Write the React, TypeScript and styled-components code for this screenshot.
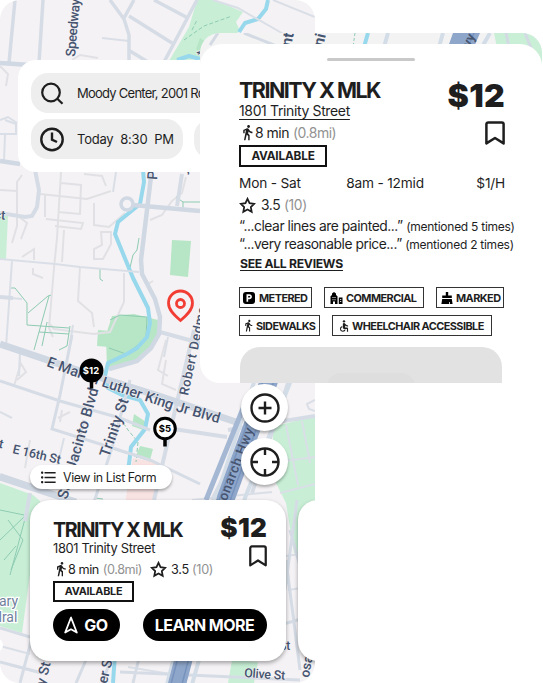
import type { ReactNode } from "react";
import styled, { createGlobalStyle } from "styled-components";
import {
    MdAccessible,
    MdDirectionsWalk,
    MdFormatListBulleted,
    MdLocalParking,
} from "react-icons/md";

const GlobalStyle = createGlobalStyle`
    * {
        box-sizing: border-box;
    }
    body {
        margin: 0;
        background-color: #ffffff;
        color: #1e1e1e;
        font-family: Inter, "Liberation Sans", sans-serif;
    }
    p, h2 {
        margin: 0;
    }
    svg {
        display: block;
        flex-shrink: 0;
    }
`;

const Page = styled.main`
    position: relative;
    width: 543px;
    height: 683px;
    overflow: hidden;
`;

const Phone = styled.div`
    position: relative;
    display: flex;
    flex-direction: column;
    width: 315px;
    height: 683px;
    padding-top: 60px;
    border-radius: 20px;
    overflow: hidden;
`;

const MapCanvas = styled.svg`
    position: absolute;
    top: 0;
    left: 0;
`;

const SearchPanel = styled.div`
    position: relative;
    display: flex;
    flex-direction: column;
    gap: 6px;
    width: 340px;
    height: 112px;
    margin-left: 18px;
    padding: 13px;
    border-radius: 18px;
    background-color: #ffffff;
`;

const FieldRow = styled.div`
    display: flex;
    gap: 11px;
`;

const Field = styled.div<{ $width: number }>`
    display: flex;
    align-items: center;
    gap: 12px;
    width: ${({ $width }) => $width}px;
    height: 40px;
    padding-left: 9px;
    border-radius: 17px;
    background-color: #eeeeee;
    font-size: 13px;
    white-space: pre;
`;

const FieldText = styled.span<{ $spacing?: number }>`
    letter-spacing: ${({ $spacing = 0 }) => $spacing}px;
`;

const Controls = styled.div`
    position: relative;
    display: flex;
    flex-direction: column;
    gap: 7px;
    width: 47px;
    margin: 212px 0 0 241px;
`;

const RoundButton = styled.button`
    display: flex;
    align-items: center;
    justify-content: center;
    width: 47px;
    height: 47px;
    padding: 0;
    border: none;
    border-radius: 50%;
    background-color: #ffffff;
    box-shadow: 0 2px 3px rgba(0, 0, 0, 0.3);
`;

const ListToggle = styled.button`
    position: relative;
    display: flex;
    align-items: center;
    gap: 5px;
    width: 142px;
    height: 24px;
    margin: -20px 0 0 30px;
    padding: 0 0 0 9px;
    border: none;
    border-radius: 12px;
    background-color: #ffffff;
    color: #1e1e1e;
    font-family: inherit;
    font-size: 12.4px;
    letter-spacing: -0.4px;
    white-space: nowrap;
    box-shadow: 0 2px 3px rgba(0, 0, 0, 0.3);
`;

const Carousel = styled.div`
    position: relative;
    display: flex;
    gap: 12px;
    width: 560px;
    margin: 11px 0 0 30px;
`;

const Card = styled.article`
    width: 256px;
    height: 161px;
    padding: 19px 19px 0 23px;
    border-radius: 20px;
    background-color: #ffffff;
    box-shadow: 0 2px 4px rgba(0, 0, 0, 0.35);
`;

const Header = styled.div`
    display: flex;
    justify-content: space-between;
`;

const Title = styled.h2<{ $size: number }>`
    font-size: ${({ $size }) => $size}px;
    font-weight: 700;
    line-height: 22px;
    letter-spacing: -0.071em;
    white-space: nowrap;
`;

const Address = styled.p<{ $size: number; $line: number; $underline?: boolean }>`
    width: fit-content;
    font-size: ${({ $size }) => $size}px;
    line-height: ${({ $line }) => $line}px;
    letter-spacing: -0.026em;
    text-decoration: ${({ $underline }) => ($underline ? "underline" : "none")};
    text-decoration-thickness: 1px;
    text-decoration-skip-ink: none;
    text-underline-offset: 3px;
`;

const Meta = styled.div<{ $size: number; $line: number }>`
    display: flex;
    align-items: center;
    height: ${({ $line }) => $line}px;
    font-size: ${({ $size }) => $size}px;
    letter-spacing: -0.036em;
    white-space: nowrap;
`;

const Walk = styled.span`
    display: flex;
    gap: 4px;
    margin-left: -1px;
`;

const Rating = styled.span<{ $inset?: number; $gap?: number }>`
    display: flex;
    align-items: center;
    gap: ${({ $gap = 5 }) => $gap}px;
    margin-left: ${({ $inset = 0 }) => $inset}px;
    letter-spacing: -0.025em;
`;

const Muted = styled.span`
    color: #929292;
`;

const PriceColumn = styled.div`
    display: flex;
    flex-direction: column;
    align-items: flex-end;
`;

const Price = styled.p<{ $size: number; $line: number }>`
    font-size: ${({ $size }) => $size}px;
    font-weight: 900;
    line-height: ${({ $line }) => $line}px;
    letter-spacing: 0.01em;
`;

const BookmarkButton = styled.button`
    margin-top: 8px;
    padding: 0;
    border: none;
    background: none;
`;

const Availability = styled.div<{ $width: number; $height: number }>`
    display: flex;
    align-items: center;
    justify-content: center;
    width: ${({ $width }) => $width}px;
    height: ${({ $height }) => $height}px;
    border: 2px solid #111111;
    font-size: ${({ $height }) => ($height > 21 ? 11.8 : 10.8)}px;
    font-weight: 700;
    letter-spacing: -0.2px;
`;

const Actions = styled.div`
    display: flex;
    justify-content: space-between;
    width: 214px;
    margin-top: 7.5px;
`;

const ActionButton = styled.button<{ $width: number }>`
    display: flex;
    align-items: center;
    justify-content: center;
    gap: 6px;
    width: ${({ $width }) => $width}px;
    height: 32px;
    padding: 0 1px 0 0;
    border: none;
    border-radius: 16px;
    background-color: #000000;
    color: #ffffff;
    font-family: inherit;
    font-size: 16px;
    font-weight: 700;
    letter-spacing: -0.5px;
    white-space: nowrap;
`;

// The sheet floats over the phone, with a strip of map left visible above it
const SheetFrame = styled.section`
    position: absolute;
    top: 33px;
    left: 200px;
    width: 342px;
    height: 350px;
    padding-top: 11px;
    border-radius: 20px 20px 0 20px;
    background-color: #f3f3f4;
    overflow: hidden;
`;

const Sheet = styled.div`
    position: relative;
    height: 339px;
    padding: 14px 37px 0 39px;
    border-radius: 22px 22px 0 0;
    background-color: #ffffff;
`;

const Handle = styled.div`
    width: 88px;
    height: 3px;
    margin: 0 0 18px 88px;
    border-radius: 2px;
    background-color: #c9c9c9;
`;

const Hours = styled.div`
    display: flex;
    justify-content: space-between;
    height: 18px;
    margin-top: 7px;
    font-size: 13.7px;
    line-height: 18px;
    letter-spacing: -0.2px;
`;

const HoursRange = styled.span`
    margin-right: 7px;
`;

const Quote = styled.p`
    font-size: 13.8px;
    line-height: 16.5px;
    letter-spacing: -0.45px;
    white-space: nowrap;
`;

const Mentions = styled.span`
    font-size: 12px;
    letter-spacing: -0.26px;
`;

const Reviews = styled.p`
    width: fit-content;
    margin: 3.5px 0 0 1px;
    border-bottom: 1px solid #1e1e1e;
    font-size: 12.2px;
    font-weight: 700;
    line-height: 13px;
    letter-spacing: -0.3px;
`;

const Chips = styled.div`
    display: flex;
    flex-wrap: wrap;
    gap: 7px 12px;
    width: 280px;
    margin-top: 16.5px;
`;

const Chip = styled.div<{ $width: number; $inset: number; $gap: number }>`
    display: flex;
    align-items: center;
    gap: ${({ $gap }) => $gap}px;
    width: ${({ $width }) => $width}px;
    height: 21px;
    padding-left: ${({ $inset }) => $inset}px;
    border: 1px solid #333333;
    font-size: 10.9px;
    font-weight: 700;
    letter-spacing: -0.55px;
    white-space: nowrap;
`;

const ParkingBadge = styled.span`
    display: flex;
    align-items: center;
    justify-content: center;
    width: 12px;
    height: 12px;
    border-radius: 3px;
    background-color: #000000;
    color: #ffffff;
`;

const Placeholder = styled.div`
    display: flex;
    justify-content: center;
    width: 262px;
    height: 60px;
    margin: 11px 0 0 1px;
    padding-top: 26px;
    border-radius: 20px;
    background-color: #e2e2e2;
`;

const PlaceholderButton = styled.div`
    width: 88px;
    height: 30px;
    border-radius: 14px;
    background-color: #dedede;
`;

const StarIcon = ({ size }: { size: number }) => (
    <svg width={size} height={size} viewBox="0 0 24 24" fill="none" stroke="#1e1e1e" strokeWidth="2.5">
        <path d="M12 2.6l2.9 6.1 6.6.9-4.8 4.6 1.2 6.6-5.9-3.2-5.9 3.2 1.2-6.6-4.8-4.6 6.6-.9z" />
    </svg>
);

const BookmarkIcon = ({ width, height }: { width: number; height: number }) => (
    <svg width={width} height={height} viewBox="0 0 20 24" fill="none" stroke="#1e1e1e" strokeWidth="2.5" strokeLinejoin="round">
        <path d="M1.400 22.400V3.200c0-1 .8-1.800 1.800-1.800h13.600c1 0 1.800.8 1.800 1.800v19.200L10 17z" />
    </svg>
);

const BuildingsIcon = () => (
    <svg width="13" height="12" viewBox="0 0 13 12">
        <path d="M.5 12V4.200L2 3V1.500L4 0l2 1.500V3l1.500 1.200V12H5V9.500H3V12zM8.800 5.500h3.700V12H8.800z" fill="#000" />
        <path d="M2.500 5h1v1h-1zM4.500 5h1v1h-1zM2.500 7.200h1v1h-1zM4.500 7.200h1v1h-1zM10.200 7h1v1h-1zM10.200 9h1v1h-1z" fill="#fff" />
    </svg>
);

const BrushIcon = () => (
    <svg width="12" height="12" viewBox="0 0 12 12" fill="#000">
        <path d="M4.800 0h2.400v3.500h3.600V6H1.200V3.500h3.600zM1.200 7h9.600l.8 5H8.800V10H8v2H.4z" />
    </svg>
);

const SearchIcon = () => (
    <svg width="25" height="25" viewBox="0 0 25 25" fill="none" stroke="#1e1e1e" strokeWidth="2.200">
        <circle cx="11" cy="11.500" r="8.800" />
        <path d="M17.300 17.800l5.200 5" />
    </svg>
);

const ClockIcon = () => (
    <svg width="25" height="25" viewBox="0 0 25 25" fill="none" stroke="#1e1e1e" strokeWidth="2.400">
        <circle cx="12" cy="12.500" r="10.700" />
        <path d="M12 5.500v7.200l5 2.300" />
    </svg>
);

const ZoomIcon = () => (
    <svg width="30" height="30" viewBox="0 0 30 30" fill="none" stroke="#1e1e1e" strokeWidth="2.400">
        <circle cx="15" cy="15" r="13.500" />
        <path d="M15 8.500v13M8.500 15h13" />
    </svg>
);

const LocateIcon = () => (
    <svg width="30" height="30" viewBox="0 0 30 30" fill="none" stroke="#1e1e1e" strokeWidth="2.400">
        <circle cx="15" cy="15" r="13.500" />
        <path d="M15 1.500v6.500M15 22v6.500M1.500 15H8M22 15h6.500" />
    </svg>
);

const GoIcon = () => (
    <svg width="14" height="18" viewBox="0 0 14 18" fill="none" stroke="#fff" strokeWidth="1.800" strokeLinejoin="round">
        <path d="M7 1.500L1.200 16.500 7 13.300 12.800 16.500zM7 1.500v3" />
    </svg>
);

const CityMap = () => (
    <MapCanvas width="315" height="683" viewBox="0 0 315 683" fill="none">
        <rect width="315" height="683" fill="#f4f2f4" />

        {/* parks */}
        <g fill="#c8efd6">
            <path d="M197 0h18l28 12-7 10 4 9-40 28-31 2 20-34z" />
            <path d="M0 216h8l-2 43H0z" />
            <path d="M0 483l33 12 7 6-18 132-22-7z" />
            <path d="M272 427l43-11v98l-17 40-4-1-8-50-10-20z" />
            <path d="M232 660l26 2-4 21h-26z" />
        </g>
        <g fill="#b6e6c5">
            <path d="M112 316l22-2 24 6 1 15-8 14-14 13-30 7-1-34z" />
            <path d="M98 330l12 1-1 16-12-1z" />
            <path d="M172 240l19 1-3 36-18-2z" />
            <path d="M134 414l12 8v9l-14-5z" />
            <path d="M140 446l13 3-3 11-14-4z" />
            <path d="M200 38l12 8-8 9-8-6z" />
        </g>
        <path d="M133 458l26 5-6 40h-28z" fill="#f8e2e2" />

        {/* footways and driveways */}
        <g stroke="#e1e1e5" strokeWidth="2">
            <path d="M0 66l8 8-2 12M72 60l8-5 18 3M0 190l17 1v35l-5 17M22 175l-5 7v33l10 8-6 16M61 172l-4 66-3 30-5 60 4 9M61 183l20 2-1 29-22-2M84 174l18 2 4 10M45 195v22M40 194l47 5 24-8M94 203v22l15 2 16-14M46 219l37 4-2 6-26-3M64 230l-2 32M101 232h10v12l-8 15h-9v-10l8-4zM22 257l12-8v11M80 267l-2 34 14 12 2 14M48 322l6 7 40 5 16-2 14-30v-29M150 220l12-5 10-14 10-8 4-16M148 284l5-3M33 268v6l10 4M20 350v16l-6 20M20 362l6 10-9 8M166 340l-8 30 10 6M30 440l-5 28" />
            <path d="M58 418l12-6M62 410l-2 12M166 360l-4 24 14 6" />
        </g>
        <g stroke="#8ecbb2" strokeWidth="1">
            <path d="M10 288h5l12 15v22l42 3M28 313l20-17 3-1M49 296l-15 54M47 322l-5 24M39 332l30 2M70 326l-3 20-8 4M139 238l-2 12-4 5-4 17M100 269v10l3 2M176 197l7 5h17M183 202v8" />
            <path d="M110 320l10-5 27 2-1 22-20 15-17-6M110 448l50 16M95 498l8 1M0 510l24 5M0 540l26-25-16 60M8 520l15 20-12 30M4 560l12-14M270 460h25" />
            <path d="M184 40l20-14 28-10M192 30l5-10M120 418l8 12 10 12-2 20" strokeDasharray="4 2" />
        </g>

        {/* waterways */}
        <g stroke="#98d8ec" strokeWidth="4" strokeLinejoin="round">
            <path d="M268 0l-2 9-8 10-13 4-6 9M200 59l-11-3-12 4" />
            <path d="M143 170l1 12-4 22-22 18-3 12 18 44 15 30 2 15-3 14-10 11-10 6-19 9-3 13 3 12 14 7 18 5 8 14-3 15-14 18-5 42M116 640l-3 43" />
        </g>

        {/* streets */}
        <g stroke="#dadfe7" strokeWidth="2">
            <path d="M102 38l27 3M116 172l-3 20M5 120l11 4v10M0 259l55 5 25 3 59 5M12 261l-6 86M0 134h17M5 135l-1 26" />
            <path d="M0 120l8-3 9 6M86 172l-2-12M0 297l22 2M73 325l-3 20M168 337l-4 20M0 412l12 6M222 340l-4 14M98 525l-2 10M315 400l-8 4 2 5 6 2M273 0l42 17" />
            <path d="M286 425l12 60M302 421l8 42M276 462l39-5M280 493l35-9M192 500l80-8M288 590l27-4M286 556l29-4M0 646l30 8M10 665l30 8M128 667l60 10" />
            <path d="M213 0l25 8 56 32M64 438l-12 50M20 350l-1 26" />
        </g>
        <g stroke="#d6dce5" strokeWidth="4">
            <path d="M15 0L9 63M43 0l-4 63M110 0l14 19 5 16v26M134 0l-10 18M129 16l43 27M154 0l32 17M197 0l-33 62M130 51l18 11" strokeWidth="3.500" />
            <path d="M35 170l4 20-2 17-5 9-7 1-25-4M182 174l-5 32M0 297l13 1M160 332l40 11" />
            <path d="M0 381l60 20 60 17 30 12M72 335l-12 60-8 34 48 15 50 16 50 24M130 380l-18 68-20 60M84 420l-15 60" strokeWidth="3" />
            <path d="M194 330l-40 170" />
            <path d="M0 475l75 26M30 493l-5 28M258 410l-46 90M288 383l-36 110M266 382l-70 180M228 430l87-14M160 427l67 10" />
            <path d="M0 628l40 12M42 600l-22 83M0 662l42 11M86 660l-10 23M102 683l10-26M139 658l-6 25M120 672l180 8M286 560l14 110M280 625l35-10M290 530l25 90M297 500l-12 90" strokeWidth="3" />
        </g>
        <path d="M0 63l45 3M0 161l20 3M133 205l67 6M152 168l-5 42-6 50 1 14 13 25 5 18-1 17-8 14-14 13-28 8" stroke="#d0d8e3" strokeWidth="4.500" />
        <circle cx="127" cy="204" r="6" stroke="#d0d8e3" strokeWidth="3.500" />
        <path d="M0 344l92 31 70 22 80 27M0 477l76 25" stroke="#cfd7e2" strokeWidth="7" />

        {/* highway */}
        <g>
            <path d="M258 370l-42 128-50 190M295 370l-50 128-54 190" stroke="#d3dde8" strokeWidth="4" />
            <path d="M273 370l-47 128-50 190" stroke="#8ea6c9" strokeWidth="18" />
            <path d="M267 370l-47 128-50 190M278 370l-47 128-50 190" stroke="#7793bd" strokeWidth="1.500" />
            <path d="M206 500l40-99" stroke="#a5b8d3" strokeWidth="5" />
        </g>

        {/* street names */}
        <defs>
            <path id="mlk" d="M46 366l55 20 71 24 60 17" />
        </defs>
        <g fill="#465470" fontFamily="Roboto, sans-serif" fontSize="13.500" fontWeight="500" stroke="#f4f2f4" strokeWidth="1" paintOrder="stroke">
            <text fontSize="14.500"><textPath href="#mlk" textLength="182">E Martin Luther King Jr Blvd</textPath></text>
            <text transform="translate(75 57) rotate(-85)" textLength="58">Speedway</text>
            <text transform="translate(67 500) rotate(-74)" fontSize="15" textLength="115">San Jacinto Blvd</text>
            <text transform="translate(109 458) rotate(-71)" fontSize="15" textLength="61">Trinity St</text>
            <text transform="translate(188 396) rotate(-78)" fontSize="13" textLength="98">Robert Dedman</text>
            <text transform="translate(12 453) rotate(13)" fontSize="12.500" textLength="49">E 16th St</text>
            <text transform="translate(-8 446) rotate(13)" fontSize="12.500">ct</text>
            <text transform="translate(157 180) rotate(-86)" fontSize="14">Park</text>
            <text transform="translate(186 174) rotate(-60)" fontSize="12">y</text>
            <text transform="translate(-6 219) rotate(4)" fontSize="13">ct</text>
            <text transform="translate(222 513) rotate(-69)" stroke="none" textLength="89">Monarch Hwy</text>
            <text transform="translate(204 56) rotate(-76)" fontSize="12">t</text>
            <text transform="translate(43 694) rotate(-76)" fontSize="14">ity St</text>
            <text transform="translate(102 703) rotate(-76)" fontSize="14">River St</text>
            <text transform="translate(309 678) rotate(-80)">osa</text>
            <text transform="translate(244 677) rotate(4)" fontSize="12.500" textLength="41">Olive St</text>
            <text x="279" y="650" fontSize="12">St</text>
            <text x="-1" y="606" fontSize="14" fontWeight="400" fill="#70819c" stroke="#fff" strokeWidth="2.500">ary</text>
            <text x="-6" y="622" fontSize="14" fontWeight="400" fill="#70819c" stroke="#fff" strokeWidth="2.500">dral</text>
        </g>
        <circle cx="-4" cy="645" r="7" fill="#fff" />

        {/* selected place and lot prices */}
        <g stroke="#f23d35" strokeWidth="2.800">
            <path d="M180.500 320.500c-6-5-12-10.500-12-17.500a12 12 0 0 1 24 0c0 7-6 12.500-12 17.500z" />
            <circle cx="180.500" cy="303.500" r="4" />
        </g>
        <g stroke="#000" strokeWidth="3.500">
            <path d="M91.500 380v8.500M165 438v8.500" />
            <circle cx="91.500" cy="370.500" r="10.200" fill="#000" />
            <circle cx="165" cy="428.500" r="10.300" fill="#fff" strokeWidth="3" />
        </g>
        <g fontFamily="Inter, sans-serif" fontSize="9.500" fontWeight="700" textAnchor="middle">
            <text x="91" y="374" fill="#fff">$12</text>
            <text x="165" y="432" fill="#000">$5</text>
        </g>
    </MapCanvas>
);

const MapStrip = () => (
    <MapCanvas width="342" height="40" viewBox="0 0 342 40" fill="none">
        <path d="M294 0h48v40h-40z" fill="#c9efd7" />
        <path d="M44 0l35 14M18 0l-8 12M325 0l8 20M306 0l3 14" stroke="#d3dae4" strokeWidth="3" />
        <path d="M168 0l-4 14" stroke="#98d8ec" strokeWidth="4" />
        <path d="M155 0l-2 14" stroke="#8ecbb2" strokeDasharray="3 2" />
        <path d="M188 0l-4 14M243 0l-4 14M290 0l-8 14" stroke="#d3dde8" strokeWidth="4" />
        <path d="M253 0h27l-6 14h-26z" fill="#8ea6c9" />
        <path d="M274 0l-6 14" stroke="#7793bd" strokeWidth="1.500" />
        <g fill="#465570" fontFamily="Roboto, sans-serif" fontSize="15" fontWeight="700">
            <text transform="translate(91 14) rotate(-78)">nt</text>
            <text transform="translate(123 14) rotate(-76)">ni</text>
            <text transform="translate(270 15) rotate(-66)" fontSize="13">vy</text>
        </g>
    </MapCanvas>
);

interface TagProps {
    icon: ReactNode;
    label: string;
    width: number;
    inset?: number;
    gap?: number;
}

const Tag = ({ icon, label, width, inset = 3, gap = 4 }: TagProps) => (
    <Chip $width={width} $inset={inset} $gap={gap}>
        {icon}
        {label}
    </Chip>
);

const tags: TagProps[] = [
    {
        icon: <ParkingBadge><MdLocalParking size={10} /></ParkingBadge>,
        label: "METERED",
        width: 73,
    },
    { icon: <BuildingsIcon />, label: "COMMERCIAL", width: 100, inset: 5, gap: 3 },
    { icon: <BrushIcon />, label: "MARKED", width: 68, inset: 4, gap: 3 },
    { icon: <MdDirectionsWalk size={13} />, label: "SIDEWALKS", width: 81, inset: 2, gap: 1 },
    { icon: <MdAccessible size={14} />, label: "WHEELCHAIR ACCESSIBLE", width: 160, inset: 4, gap: 1 },
];

const ParkingCard = () => (
    <Card>
        <Header>
            <div>
                <Title $size={19.7}>TRINITY X MLK</Title>
                <Address $size={12.9} $line={16}>1801 Trinity Street</Address>
                <Meta $size={12.7} $line={24}>
                    <MdDirectionsWalk size={16} />
                    <Walk>
                        8 min <Muted>(0.8mi)</Muted>
                    </Walk>
                    <Rating $inset={8} $gap={4}>
                        <StarIcon size={17} />
                        <span>3.5 <Muted>(10)</Muted></span>
                    </Rating>
                </Meta>
            </div>
            <PriceColumn>
                <Price $size={26} $line={18}>$12</Price>
                <BookmarkButton aria-label="Save">
                    <BookmarkIcon width={18} height={22} />
                </BookmarkButton>
            </PriceColumn>
        </Header>
        <Availability $width={81} $height={20.5}>AVAILABLE</Availability>
        <Actions>
            <ActionButton $width={67}>
                <GoIcon />
                GO
            </ActionButton>
            <ActionButton $width={124}>LEARN MORE</ActionButton>
        </Actions>
    </Card>
);

const DetailSheet = () => (
    <SheetFrame>
        <MapStrip />
        <Sheet>
            <Handle />
            <Header>
                <div>
                    <Title $size={21.5}>TRINITY X MLK</Title>
                    <Address $size={14} $line={20} $underline>1801 Trinity Street</Address>
                    <Meta $size={14} $line={22}>
                        <MdDirectionsWalk size={17} />
                        <Walk>
                            8 min <Muted>(0.8mi)</Muted>
                        </Walk>
                    </Meta>
                </div>
                <PriceColumn>
                    <Price $size={32} $line={34}>$12</Price>
                    <BookmarkButton aria-label="Save">
                        <BookmarkIcon width={20} height={24} />
                    </BookmarkButton>
                </PriceColumn>
            </Header>
            <Availability $width={88} $height={22}>AVAILABLE</Availability>
            <Hours>
                <span>Mon - Sat</span>
                <HoursRange>8am - 12mid</HoursRange>
                <span>$1/H</span>
            </Hours>
            <Meta $size={13.8} $line={26}>
                <Rating>
                    <StarIcon size={17} />
                    <span>3.5 <Muted>(10)</Muted></span>
                </Rating>
            </Meta>
            <Quote>“...clear lines are painted...” <Mentions>(mentioned 5 times)</Mentions></Quote>
            <Quote>“...very reasonable price...” <Mentions>(mentioned 2 times)</Mentions></Quote>
            <Reviews>SEE ALL REVIEWS</Reviews>
            <Chips>
                {tags.map((tag) => (
                    <Tag key={tag.label} {...tag} />
                ))}
            </Chips>
            <Placeholder>
                <PlaceholderButton />
            </Placeholder>
        </Sheet>
    </SheetFrame>
);

const App = () => (
    <Page>
        <GlobalStyle />
        <Phone>
            <CityMap />
            <SearchPanel>
                <Field $width={320}>
                    <SearchIcon />
                    <FieldText $spacing={-0.75}>Moody Center, 2001 Robert Dedman Dr</FieldText>
                </Field>
                <FieldRow>
                    <Field $width={153}>
                        <ClockIcon />
                        <FieldText $spacing={-0.23}>Today  8:30  PM</FieldText>
                    </Field>
                    <Field $width={153} />
                </FieldRow>
            </SearchPanel>
            <Controls>
                <RoundButton aria-label="Zoom in">
                    <ZoomIcon />
                </RoundButton>
                <RoundButton aria-label="My location">
                    <LocateIcon />
                </RoundButton>
            </Controls>
            <ListToggle>
                <MdFormatListBulleted size={19} />
                View in List Form
            </ListToggle>
            <Carousel>
                <ParkingCard />
                <Card />
            </Carousel>
        </Phone>
        <DetailSheet />
    </Page>
);

export default App;
